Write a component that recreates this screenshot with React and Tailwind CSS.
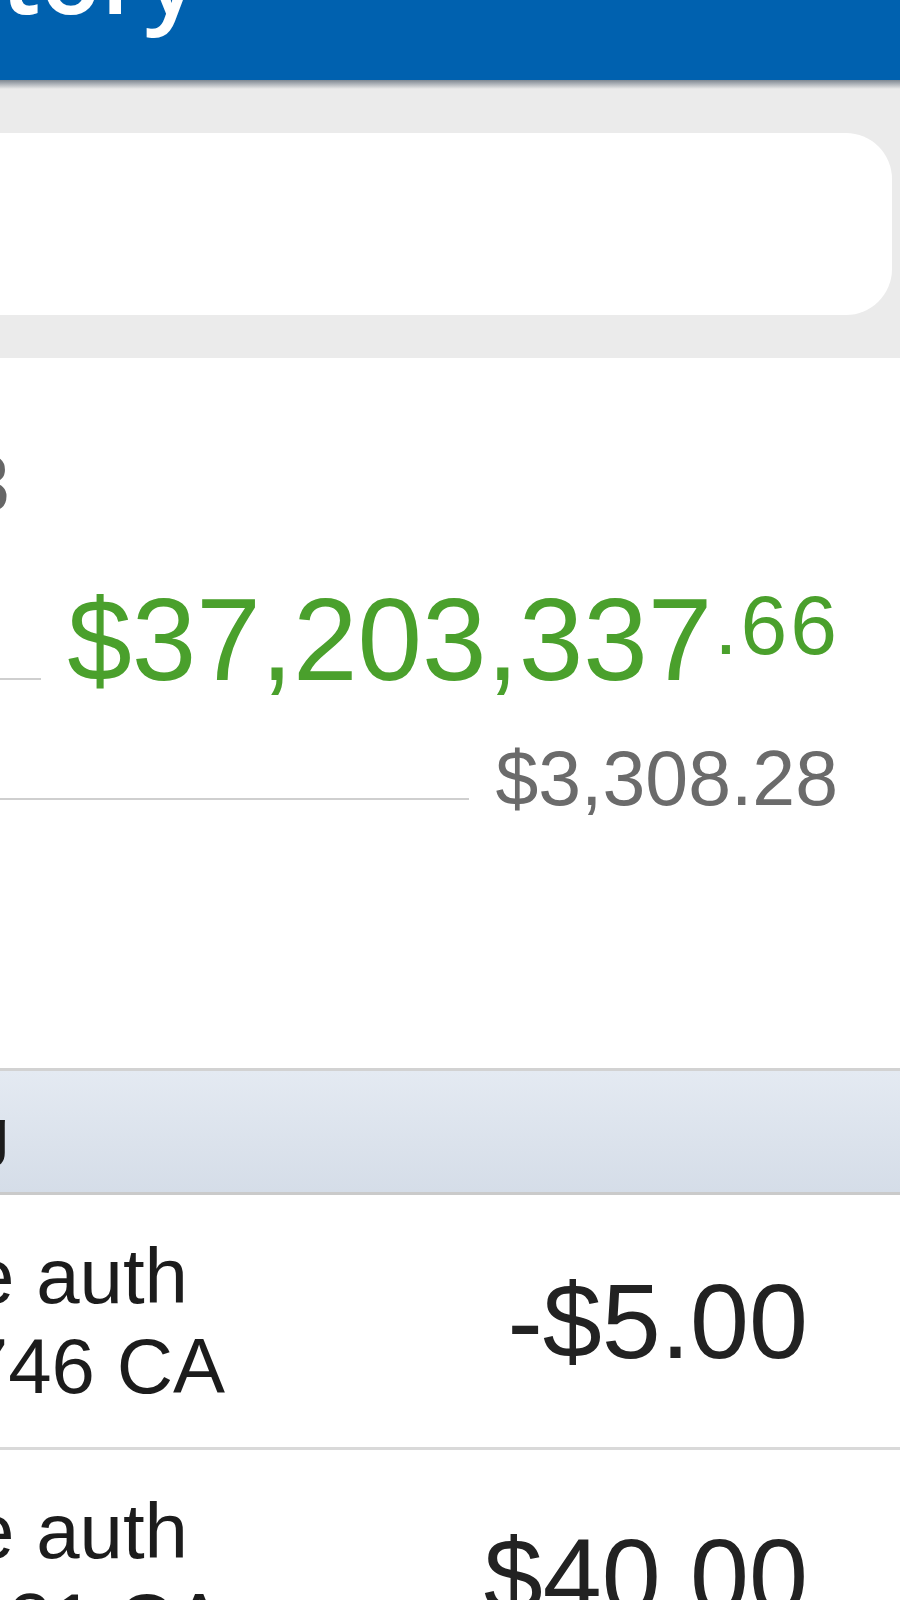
import React from 'react';

const sans = { fontFamily: '"Liberation Sans", Arial, sans-serif' };

// text that is cut off on the left edge: the right end sits at a fixed x
const RightEnd = ({ width, className, children }) => (
  <div className={`flex justify-end ${width}`}>
    <span className={`shrink-0 whitespace-nowrap ${className}`}>{children}</span>
  </div>
);

const Txn = ({ line1, line2, amount }) => (
  <div className="flex h-[255px] items-center justify-between border-b-[3px] border-[#d9d9d9] pr-[92px]">
    <div className="flex flex-col text-[78px] leading-[90px] text-[#1c1c1c]">
      <RightEnd width="w-[188px]">{line1}</RightEnd>
      <RightEnd width="w-[225px]">{line2}</RightEnd>
    </div>
    <span className="text-[106px] leading-none text-[#222]">{amount}</span>
  </div>
);

export default function App() {
  return (
    <div className="relative w-[900px] h-[1600px] overflow-hidden bg-white" style={sans}>
      <header className="h-[80px] overflow-hidden bg-[#0061af]">
        <div style={{ fontFamily: '"Open Sans", sans-serif' }} className="-mt-[75px]">
          <RightEnd width="w-[198px]" className="text-[100px] font-semibold leading-none text-white">
            Account History
          </RightEnd>
        </div>
      </header>

      <section className="bg-[#ebebeb]">
        <div className="h-[9px] bg-gradient-to-b from-[#7f8892] to-[#ebebeb]" />
        <div className="pt-[44px] pb-[43px]">
          <div className="-ml-[60px] mr-[8px] h-[182px] rounded-[46px] bg-white" />
        </div>
      </section>

      <section className="pt-[86px] pb-[251px]">
        <RightEnd width="w-[10px]" className="text-[80px] leading-none text-[#666]">
          x1233
        </RightEnd>

        <div className="mt-[58px] flex items-end pr-[60px]">
          <div className="mb-[18px] flex-1 border-b-2 border-[#cfcfcf]" />
          <div className="ml-[26px] flex items-start text-[#4aa02c]">
            <span className="text-[116px] leading-none">$37,203,337</span>
            <span className="ml-[2px] mt-[1px] text-[84px] leading-none tracking-[3px]">.66</span>
          </div>
        </div>

        <div className="mt-[42px] flex items-end pr-[62px]">
          <div className="mb-[17px] flex-1 border-b-2 border-[#cfcfcf]" />
          <span className="ml-[26px] text-[77px] leading-none text-[#6b6b6b]">$3,308.28</span>
        </div>
      </section>

      <div className="flex h-[127px] items-center border-y-[3px] border-t-[#d2d2d2] border-b-[#cacaca] bg-gradient-to-b from-[#e4eaf2] to-[#d5dde8]">
        <RightEnd width="w-[9px]" className="text-[64px] leading-none text-[#1c1c1c]">
          Pending
        </RightEnd>
      </div>

      <Txn line1="Purchase auth" line2="3746 CA" amount="-$5.00" />
      <Txn line1="Purchase auth" line2="1021 CA" amount="$40.00" />
    </div>
  );
}
